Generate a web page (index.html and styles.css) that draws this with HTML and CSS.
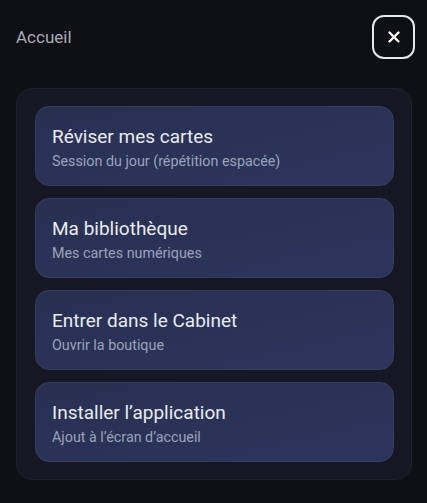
FILE: index.html
```html
<!DOCTYPE html>
<html lang="fr">

<head>
    <meta charset="UTF-8">
    <meta name="viewport" content="width=device-width, initial-scale=1.0">
    <title>Accueil</title>
    <link rel="stylesheet" href="styles.css">
</head>

<body>
    <div class="sheet">
        <header class="top-bar">
            <span class="top-title">Accueil</span>
            <button type="button" class="close-btn" aria-label="Fermer">
                <svg width="12" height="12" viewBox="0 0 12 12">
                    <path d="M1.5 1.5 L10.5 10.5 M10.5 1.5 L1.5 10.5" stroke="#fff" stroke-width="2.4" stroke-linecap="round" fill="none"/>
                </svg>
            </button>
        </header>

        <!-- Menu -->
        <nav class="menu">
            <a class="menu-item" href="#">
                <span class="item-title">Réviser mes cartes</span>
                <span class="item-sub">Session du jour (répétition espacée)</span>
            </a>
            <a class="menu-item" href="#">
                <span class="item-title">Ma bibliothèque</span>
                <span class="item-sub">Mes cartes numériques</span>
            </a>
            <a class="menu-item" href="#">
                <span class="item-title">Entrer dans le Cabinet</span>
                <span class="item-sub">Ouvrir la boutique</span>
            </a>
            <a class="menu-item" href="#">
                <span class="item-title">Installer l’application</span>
                <span class="item-sub">Ajout à l’écran d’accueil</span>
            </a>
        </nav>
    </div>
</body>

</html>
```

FILE: styles.css
```css
body {
    font-family: 'Roboto', 'Liberation Sans', sans-serif;
    margin: 0;
    padding: 0;
    background-color: #0f1015;
}

.sheet {
    padding: 15px 12px 0 16px;
}

.top-bar {
    display: flex;
    justify-content: space-between;
    align-items: center;
    height: 44px;
}

.top-title {
    font-size: 17px;
    color: #a9abb4;
}

.close-btn {
    width: 43px;
    height: 44px;
    box-sizing: border-box;
    border: 2px solid #e6e7ea;
    border-radius: 12px;
    background: transparent;
    display: flex;
    align-items: center;
    justify-content: center;
    padding: 0;
    cursor: pointer;
}

.menu {
    margin-top: 29px;
    width: 396px;
    box-sizing: border-box;
    padding: 17px 17px 17px 18px;
    background-color: #161722;
    border: 1px solid #20212d;
    border-radius: 16px;
    display: flex;
    flex-direction: column;
    gap: 12px;
}

.menu-item {
    display: flex;
    flex-direction: column;
    gap: 2px;
    height: 80px;
    box-sizing: border-box;
    padding: 17px 16px 15px;
    background: linear-gradient(to bottom right, #283051, #2c355d);
    border: 1px solid #363d5f;
    border-radius: 14px;
    text-decoration: none;
}

.item-title {
    font-size: 19px;
    line-height: 25px;
    color: #e9ebf2;
}

.item-sub {
    font-size: 14.3px;
    line-height: 20px;
    color: #9ca2bb;
}
```
